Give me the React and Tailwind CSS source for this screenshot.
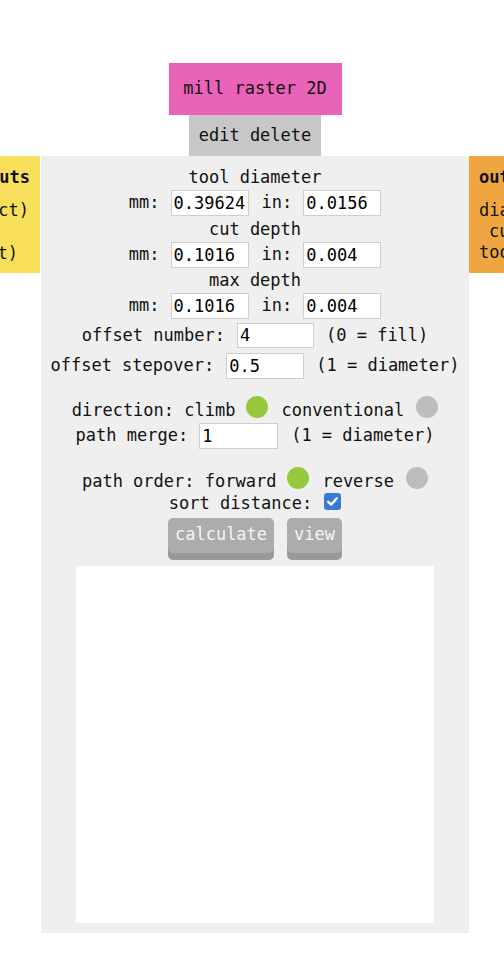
import React from 'react';

const Field = ({ value, w = 'w-[78px]', h = 'h-[26px]' }) => (
    <input
        readOnly
        value={value}
        className={`${w} ${h} border border-[#cfcfcf] bg-white px-[2px] text-[17px] text-black outline-none font-['DejaVu_Sans_Mono',monospace]`}
    />
);

const Dot = ({ on }) => (
    <span className={`inline-block w-[22px] h-[22px] rounded-full ${on ? 'bg-[#95c83b]' : 'bg-[#bdbdbd]'}`}></span>
);

const UnitRow = ({ mm, inch, h = 'h-[26px]' }) => (
    <div className="flex items-center justify-center">
        <span className="mr-[11px]">mm:</span>
        <Field value={mm} h={h} />
        <span className="ml-[13px] mr-[11px]">in:</span>
        <Field value={inch} h={h} />
    </div>
);

const App = () => {
    return (
        <div className="relative w-[504px] h-[960px] bg-white overflow-hidden text-[17px] text-[#111] font-['DejaVu_Sans_Mono',monospace]">
            {/* module to the left, mostly off screen */}
            <div className="absolute left-0 top-[156px] w-[40px] h-[117px] bg-[#f8df5b] overflow-hidden">
                <div className="absolute right-[10px] top-[9px] whitespace-nowrap font-bold leading-[24px]">outputs</div>
                <div className="absolute right-[11px] top-[42px] whitespace-nowrap leading-[24px]">(object)</div>
                <div className="absolute right-[22px] top-[85px] whitespace-nowrap leading-[24px]">(float)</div>
            </div>

            {/* module to the right, mostly off screen */}
            <div className="absolute left-[469px] top-[156px] w-[35px] h-[117px] bg-[#f0a640] overflow-hidden">
                <div className="absolute left-[10px] top-[9px] whitespace-nowrap font-bold leading-[24px]">outputs</div>
                <div className="absolute left-[10px] top-[44px] whitespace-nowrap leading-[20px]">diameter</div>
                <div className="absolute left-[20px] top-[65px] whitespace-nowrap leading-[20px]">cut</div>
                <div className="absolute left-[10px] top-[86px] whitespace-nowrap leading-[20px]">tool</div>
            </div>

            {/* mill raster 2D module */}
            <div className="absolute left-[41px] top-[63px] w-[428px] flex flex-col items-center">
                <div className="w-[173px] h-[52px] bg-[#e964b9] flex items-center justify-center">mill raster 2D</div>
                <div className="w-[132px] h-[41px] bg-[#c7c7c7] flex items-center justify-center">edit delete</div>

                <div className="w-full bg-[#efefef] pt-[8px] pb-[10px] flex flex-col items-center">
                    <div className="h-[26px] leading-[26px]">tool diameter</div>
                    <UnitRow mm="0.39624" inch="0.0156" />
                    <div className="h-[26px] leading-[26px]">cut depth</div>
                    <UnitRow mm="0.1016" inch="0.004" />
                    <div className="h-[25px] leading-[25px]">max depth</div>
                    <UnitRow mm="0.1016" inch="0.004" />

                    <div className="flex items-center justify-center gap-[12px] mt-[4px]">
                        <span>offset number:</span>
                        <Field value="4" w="w-[77px]" h="h-[25px]" />
                        <span>(0 = fill)</span>
                    </div>
                    <div className="flex items-center justify-center gap-[12px] mt-[4px]">
                        <span>offset stepover:</span>
                        <Field value="0.5" />
                        <span>(1 = diameter)</span>
                    </div>

                    <div className="flex items-center justify-center h-[23px] mt-[21px]">
                        <span>direction: climb</span>
                        <span className="ml-[11px]"><Dot on /></span>
                        <span className="ml-[13px]">conventional</span>
                        <span className="ml-[12px]"><Dot /></span>
                    </div>
                    <div className="flex items-center justify-center gap-[11px]">
                        <span>path merge:</span>
                        <Field value="1" w="w-[79px]" />
                        <span className="ml-[2px]">(1 = diameter)</span>
                    </div>

                    <div className="flex items-center justify-center h-[22px] mt-[22px]">
                        <span>path order: forward</span>
                        <span className="ml-[11px]"><Dot on /></span>
                        <span className="ml-[13px]">reverse</span>
                        <span className="ml-[12px]"><Dot /></span>
                    </div>
                    <div className="flex items-end justify-center h-[21px]">
                        <span className="leading-[21px]">sort distance:</span>
                        <span className="ml-[12px] mb-[4px] w-[17px] h-[17px] rounded-[3px] bg-[#3b79d6] flex items-center justify-center">
                            <svg width="13" height="13" viewBox="0 0 13 13">
                                <path d="M2.2 6.8 L5.2 9.6 L10.8 3.2" fill="none" stroke="#fff" strokeWidth="2.4" strokeLinecap="round" strokeLinejoin="round" />
                            </svg>
                        </span>
                    </div>

                    <div className="flex justify-center gap-[13px] mt-[4px]">
                        <button className="h-[35px] px-[7px] rounded-[5px] bg-[#acacac] text-[#f5f5f5] shadow-[0_7px_0_#999999]">calculate</button>
                        <button className="h-[35px] px-[7px] rounded-[5px] bg-[#acacac] text-[#f5f5f5] shadow-[0_7px_0_#999999]">view</button>
                    </div>

                    <div className="mt-[13px] w-[358px] h-[357px] bg-white"></div>
                </div>
            </div>
        </div>
    );
};

export default App;
